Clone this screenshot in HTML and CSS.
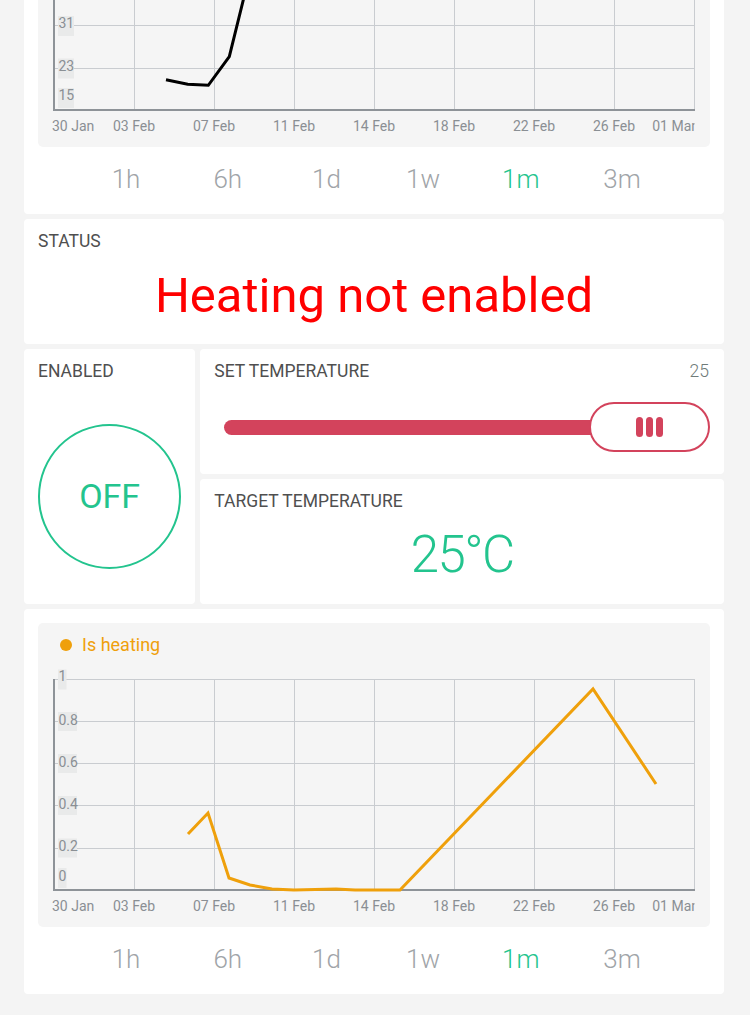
FILE: index.html
```html
<!DOCTYPE html>
<html lang="en">
<head>
<meta charset="utf-8">
<title>Heating dashboard</title>
<link rel="stylesheet" href="styles.css">
</head>
<body>
<main class="dash">

  <section class="card chart-card wide rows-3">
    <div class="chart">
      <div class="legend"><span class="dot dot-dark"></span></div>
      <svg class="plot" width="672" height="260" viewBox="0 0 672 260">
        <defs><clipPath id="clipTop"><rect x="0" y="0" width="656.5" height="260"/></clipPath></defs>
        <path class="grid" d="M16 12.5H656M16 54.5H656M16 96.5H656M16 138.5H656M16 181.5H656M96.5 12V223M176.5 12V223M256.5 12V223M336.5 12V223M416.5 12V223M496.5 12V223M576.5 12V223M656.5 12V223"/>
        <path class="axis" d="M16 12V224M15 223H657"/>
        <rect class="ybox" x="20" y="129" width="16" height="20"/><text class="ylab" x="20.5" y="140.5">31</text>
        <rect class="ybox" x="20" y="171.5" width="16" height="20"/><text class="ylab" x="20.5" y="184">23</text>
        <rect class="ybox" x="20" y="201" width="16" height="20"/><text class="ylab" x="20.5" y="213">15</text>
        <text class="xlab" x="14" y="244">30 Jan</text>
        <text class="xlab mid" x="96" y="244">03 Feb</text>
        <text class="xlab mid" x="176" y="244">07 Feb</text>
        <text class="xlab mid" x="256" y="244">11 Feb</text>
        <text class="xlab mid" x="336" y="244">14 Feb</text>
        <text class="xlab mid" x="416" y="244">18 Feb</text>
        <text class="xlab mid" x="496" y="244">22 Feb</text>
        <text class="xlab mid" x="576" y="244">26 Feb</text>
        <text class="xlab end" x="658" y="244" clip-path="url(#clipTop)">01 Mar</text>
        <polyline class="series series-dark" points="128,192.7 149.7,197.3 170.3,198.3 191.3,169.7 205.3,113 216,62 228,20"/>
      </svg>
    </div>
    <nav class="tabs">
      <span class="tab">1h</span><span class="tab">6h</span><span class="tab">1d</span><span class="tab">1w</span><span class="tab active">1m</span><span class="tab">3m</span>
    </nav>
  </section>

  <section class="card wide">
    <div class="label">STATUS</div>
    <div class="value value-status">Heating not enabled</div>
  </section>

  <section class="card narrow rows-2">
    <div class="label">ENABLED</div>
    <div class="switch-area">
      <div class="switch">OFF</div>
    </div>
  </section>

  <section class="card half">
    <div class="label-row"><span class="label">SET TEMPERATURE</span><span class="label-value">25</span></div>
    <div class="slider-area">
      <div class="slider">
        <div class="track"></div>
        <div class="thumb"><span class="grip"></span><span class="grip"></span><span class="grip"></span></div>
      </div>
    </div>
  </section>

  <section class="card half">
    <div class="label">TARGET TEMPERATURE</div>
    <div class="value value-temp">25°C</div>
  </section>

  <section class="card chart-card wide rows-3">
    <div class="chart">
      <div class="legend"><span class="dot dot-orange"></span><span class="legend-text legend-orange">Is heating</span></div>
      <svg class="plot" width="672" height="260" viewBox="0 0 672 260">
        <defs><clipPath id="clipBottom"><rect x="0" y="0" width="656.5" height="260"/></clipPath></defs>
        <path class="grid" d="M16 12.5H656M16 54.5H656M16 96.5H656M16 138.5H656M16 181.5H656M96.5 12V223M176.5 12V223M256.5 12V223M336.5 12V223M416.5 12V223M496.5 12V223M576.5 12V223M656.5 12V223"/>
        <path class="axis" d="M16 12V224M15 223H657"/>
        <rect class="ybox" x="20" y="2.5" width="8.5" height="20"/><text class="ylab" x="20.5" y="14">1</text>
        <rect class="ybox" x="20" y="45" width="19" height="19"/><text class="ylab" x="20.5" y="57.5">0.8</text>
        <rect class="ybox" x="20" y="87" width="19" height="19"/><text class="ylab" x="20.5" y="99.5">0.6</text>
        <rect class="ybox" x="20" y="129" width="19" height="19"/><text class="ylab" x="20.5" y="141.5">0.4</text>
        <rect class="ybox" x="20" y="171.5" width="19" height="19"/><text class="ylab" x="20.5" y="184">0.2</text>
        <rect class="ybox" x="20" y="201" width="8.5" height="20"/><text class="ylab" x="20.5" y="214">0</text>
        <text class="xlab" x="14" y="244">30 Jan</text>
        <text class="xlab mid" x="96" y="244">03 Feb</text>
        <text class="xlab mid" x="176" y="244">07 Feb</text>
        <text class="xlab mid" x="256" y="244">11 Feb</text>
        <text class="xlab mid" x="336" y="244">14 Feb</text>
        <text class="xlab mid" x="416" y="244">18 Feb</text>
        <text class="xlab mid" x="496" y="244">22 Feb</text>
        <text class="xlab mid" x="576" y="244">26 Feb</text>
        <text class="xlab end" x="658" y="244" clip-path="url(#clipBottom)">01 Mar</text>
        <polyline class="series series-orange" points="150,167 170,146 191,211 212,218 234,222 256,223 298,222 317,223 362,223 555,22 618,117"/>
      </svg>
    </div>
    <nav class="tabs">
      <span class="tab">1h</span><span class="tab">6h</span><span class="tab">1d</span><span class="tab">1w</span><span class="tab active">1m</span><span class="tab">3m</span>
    </nav>
  </section>

</main>
</body>
</html>
```

FILE: styles.css
```css
html, body {
  margin: 0;
  padding: 0;
}

body {
  background: #f4f4f4;
  font-family: Roboto, "Noto Sans", "DejaVu Sans", sans-serif;
  color: #4a4a4a;
}

.dash {
  width: 700px;
  margin: -171px 0 0 24px;
  display: grid;
  grid-template-columns: repeat(8, 1fr);
  grid-auto-rows: 125px;
  gap: 5px;
}

.card {
  background: #fff;
  border-radius: 4px;
  display: flex;
  flex-direction: column;
  padding: 12px 14px 0;
  box-sizing: border-box;
  min-width: 0;
}

.wide { grid-column: 1 / -1; }
.narrow { grid-column: span 2; }
.half { grid-column: span 6; }
.rows-2 { grid-row: span 2; }
.rows-3 { grid-row: span 3; }

.label {
  font-size: 17.5px;
  line-height: 20px;
  color: #4f4f4f;
  white-space: nowrap;
}

.label-row {
  display: flex;
  justify-content: space-between;
  align-items: center;
}

.label-value {
  font-size: 17.5px;
  font-weight: 300;
  line-height: 20px;
  color: #6f7b79;
  padding-right: 1px;
}

.value {
  flex: 1;
  display: flex;
  align-items: center;
  justify-content: center;
  line-height: 1;
  white-space: nowrap;
}

.value-status {
  font-size: 49px;
  color: #ff0000;
  padding-bottom: 4px;
}

.value-temp {
  font-size: 51px;
  font-weight: 300;
  letter-spacing: -1.5px;
  color: #23c48e;
  padding-bottom: 6px;
}

/* switch */
.switch-area {
  flex: 1;
  display: flex;
  align-items: center;
  justify-content: center;
  padding-top: 7px;
}

.switch {
  width: 145px;
  height: 145px;
  box-sizing: border-box;
  border: 2px solid #23c48e;
  border-radius: 50%;
  display: flex;
  align-items: center;
  justify-content: center;
  color: #23c48e;
  font-size: 34px;
  line-height: 1;
}

/* slider */
.slider-area {
  flex: 1;
  display: flex;
  align-items: center;
  padding-bottom: 1px;
}

.slider {
  flex: 1;
  display: flex;
  align-items: center;
  margin-left: 10px;
}

.track {
  flex: 1;
  height: 15px;
  background: #d3435c;
  border-radius: 8px 0 0 8px;
  margin-right: -12px;
}

.thumb {
  position: relative;
  width: 121px;
  height: 50px;
  box-sizing: border-box;
  border: 2px solid #d3435c;
  border-radius: 25px;
  background: #fff;
  display: flex;
  align-items: center;
  justify-content: center;
  gap: 3px;
}

.grip {
  width: 7px;
  height: 20px;
  border-radius: 3.5px;
  background: #d3435c;
}

/* charts */
.chart-card {
  padding: 14px 14px 0;
}

.chart {
  height: 304px;
  background: #f5f5f5;
  border-radius: 5px;
  display: flex;
  flex-direction: column;
  overflow: hidden;
}

.legend {
  height: 44px;
  display: flex;
  align-items: center;
  padding-left: 22px;
  gap: 10px;
}

.dot {
  width: 12px;
  height: 12px;
  border-radius: 50%;
}

.dot-orange { background: #efa00b; }
.dot-dark { background: #000; }

.legend-text {
  font-size: 18px;
  line-height: 20px;
}

.legend-orange { color: #efa00b; }

.plot {
  display: block;
}

.grid {
  stroke: #c9ccd0;
  stroke-width: 1;
  fill: none;
}

.axis {
  stroke: #8e9398;
  stroke-width: 2;
  fill: none;
}

.ybox {
  fill: #e9eaea;
}

.ylab,
.xlab {
  font-family: Roboto, "Noto Sans", sans-serif;
  font-size: 14px;
  fill: #8a8f94;
}

.xlab.mid { text-anchor: middle; }
.xlab.end { text-anchor: end; }

.series {
  fill: none;
  stroke-width: 3;
  stroke-linejoin: miter;
}

.series-dark { stroke: #000; }
.series-orange { stroke: #efa00b; }

.tabs {
  flex: 1;
  display: grid;
  grid-template-columns: 103px 100.5px 97px 96px 99.5px 103px;
  align-items: center;
  padding: 0 0 4px 36.5px;
}

.tab {
  text-align: center;
  font-size: 26px;
  font-weight: 300;
  line-height: 30px;
  color: #a0a4a8;
}

.tab.active {
  color: #23c48e;
}
```
